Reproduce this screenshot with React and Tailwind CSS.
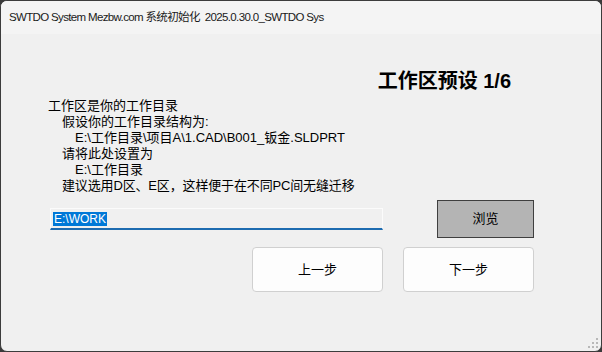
const cjk = { fontFamily: '"Liberation Sans", "Noto Sans CJK SC", sans-serif' };

const GripDots = () => {
  const dots = [
    [8, 0],
    [4, 4],
    [8, 4],
    [0, 8],
    [4, 8],
    [8, 8],
  ];
  return (
    <div className="absolute right-[3px] bottom-[3px] w-[10px] h-[10px]">
      {dots.map(([x, y], i) => (
        <span
          key={i}
          className="absolute w-[2px] h-[2px] bg-[#b8b8b8]"
          style={{ left: x, top: y }}
        />
      ))}
    </div>
  );
};

export default function App() {
  return (
    <div className="w-[602px] h-[352px] bg-[#3a3a3a]" style={cjk}>
      <div className="relative w-full h-full bg-[#f0f0f0] border border-[#3c3c3c] rounded-[7px] overflow-hidden flex flex-col">
        <div className="h-[33px] shrink-0 bg-[#f4f4f4] flex items-center pl-[8px] text-[11.5px] tracking-[-0.65px] text-[#1a1a1a]">
          SWTDO System Mezbw.com 系统初始化&nbsp;&nbsp;2025.0.30.0_SWTDO Sys
        </div>

        <div className="flex flex-col">
          <div className="flex justify-end pr-[90px] mt-[35px]">
            <h1 className="text-[20px] leading-[24px] font-bold text-black">工作区预设 1/6</h1>
          </div>

          <div className="mt-[5px] pl-[47px] text-[13px] leading-[16px] text-black">
            <p>工作区是你的工作目录</p>
            <p className="pl-[14px]">假设你的工作目录结构为:</p>
            <p className="pl-[27px]">E:\工作目录\项目A\1.CAD\B001_钣金.SLDPRT</p>
            <p className="pl-[14px]">请将此处设置为</p>
            <p className="pl-[27px]">E:\工作目录</p>
            <p className="pl-[14px] tracking-[-0.15px]">建议选用D区、E区，这样便于在不同PC间无缝迁移</p>
          </div>

          <div className="flex items-center mt-[6px] pl-[49px]">
            <div className="w-[333px] h-[22px] border border-[#fbfbfb] border-b-2 border-b-[#1d6bb0] bg-[#f0f0f0] flex items-center pl-[2px]">
              <span className="bg-[#0078d7] text-white text-[12px] leading-[14px] px-[1px]">E:\WORK</span>
            </div>
            <button className="ml-[54px] w-[97px] h-[38px] bg-[#b4b4b4] border border-[#3f3f3f] text-[13px] text-black">
              浏览
            </button>
          </div>

          <div className="flex gap-[20px] mt-[9px] pl-[251px]">
            <button className="w-[131px] h-[45px] bg-[#fdfdfd] border border-[#d0d0d0] rounded-[4px] text-[13px] text-black">
              上一步
            </button>
            <button className="w-[131px] h-[45px] bg-[#fdfdfd] border border-[#d0d0d0] rounded-[4px] text-[13px] text-black">
              下一步
            </button>
          </div>
        </div>

        <GripDots />
      </div>
    </div>
  );
}
